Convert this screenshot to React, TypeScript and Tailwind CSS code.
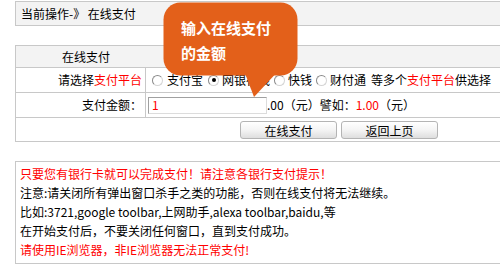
import React from "react"

const font = { fontFamily: '"Noto Sans CJK SC", "Liberation Sans", sans-serif' }

function Radio({ checked = false }: { checked?: boolean }) {
  return (
    <span className="relative inline-flex h-[11px] w-[11px] shrink-0 items-center justify-center rounded-full border border-[#8a8a8a] border-r-[#d4d4d4] border-b-[#d4d4d4] bg-white">
      {checked && <span className="h-[4px] w-[4px] rounded-full bg-black" />}
    </span>
  )
}

function Bubble() {
  return (
    <div className="absolute left-[163px] top-[2px] h-[100px] w-[140px]">
      <svg width="140" height="100" viewBox="0 0 140 100">
        <rect x="0.5" y="0.5" width="134" height="73" rx="17" fill="#e3601a" />
        <polygon points="80,66 118,66 91,95" fill="#e3601a" />
      </svg>
      <div className="absolute left-[18px] top-[13px] text-[15px] font-bold leading-[25px] text-white">
        <div>输入在线支付</div>
        <div>的金额</div>
      </div>
    </div>
  )
}

export default function App() {
  return (
    <div style={font} className="relative h-[266px] w-[500px] overflow-hidden bg-white text-[12px] text-black">
      <div className="w-[680px] pl-[15px] pt-[1px]">
        <div className="flex h-[25px] w-[648px] items-center border border-[#c8c8c8] bg-[#f3f3f3] pl-[5px]">
          当前操作-》 在线支付
        </div>

        <div className="mt-[19px] w-[648px] border border-[#c8c8c8]">
          <div className="flex h-[21px] items-center bg-[#f3f3f3] pl-[46px]">在线支付</div>

          <div className="flex h-[25px] border-t border-[#c8c8c8]">
            <div className="flex w-[130px] items-center justify-end border-r border-[#c8c8c8] pr-[3px]">
              请选择<span className="text-[#ff0000]">支付平台</span>
            </div>
            <div className="flex items-center pl-[6px] whitespace-nowrap">
              <Radio />
              <span className="ml-[4px] mr-[5px]">支付宝</span>
              <Radio checked />
              <span className="ml-[3px] mr-[4px]">网银在线</span>
              <Radio />
              <span className="ml-[3px] mr-[4px]">快钱</span>
              <Radio />
              <span className="ml-[3px] mr-[5px]">财付通</span>
              <span>等多个</span>
              <span className="text-[#ff0000]">支付平台</span>
              <span>供选择</span>
            </div>
          </div>

          <div className="flex h-[25px] border-t border-[#c8c8c8]">
            <div className="flex w-[130px] items-center justify-end border-r border-[#c8c8c8] pr-[3px]">
              支付金额：
            </div>
            <div className="flex items-center pl-[2px] whitespace-nowrap">
              <div className="flex h-[17px] w-[119px] items-center border border-[#a0a0a0] border-r-[#dcdcdc] border-b-[#dcdcdc] bg-white pl-[3px] text-[#ff0000]">
                1
              </div>
              <span>.00（元）譬如：</span>
              <span className="text-[#ff0000]">1.00</span>
              <span>（元）</span>
            </div>
          </div>

          <div className="flex h-[24px] items-center justify-center gap-[4px] border-t border-[#c8c8c8]">
            <button className="h-[18px] w-[97px] rounded-[3px] border border-[#b4b4b4] bg-gradient-to-b from-white via-[#f4f4f4] to-[#dedede] text-[12px]">
              在线支付
            </button>
            <button className="h-[18px] w-[97px] rounded-[3px] border border-[#b4b4b4] bg-gradient-to-b from-white via-[#f4f4f4] to-[#dedede] text-[12px]">
              返回上页
            </button>
          </div>
        </div>

        <div className="mt-[19px] h-[103px] w-[648px] border border-[#c8c8c8] pl-[4px] pt-[2px] leading-[19px] whitespace-nowrap">
          <div className="text-[#ff0000]">只要您有银行卡就可以完成支付！请注意各银行支付提示！</div>
          <div>注意:请关闭所有弹出窗口杀手之类的功能，否则在线支付将无法继续。</div>
          <div>比如:3721,google toolbar,上网助手,alexa toolbar,baidu,等</div>
          <div>在开始支付后，不要关闭任何窗口，直到支付成功。</div>
          <div className="text-[#ff0000]">请使用IE浏览器，非IE浏览器无法正常支付!</div>
        </div>
      </div>
      <Bubble />
    </div>
  )
}
